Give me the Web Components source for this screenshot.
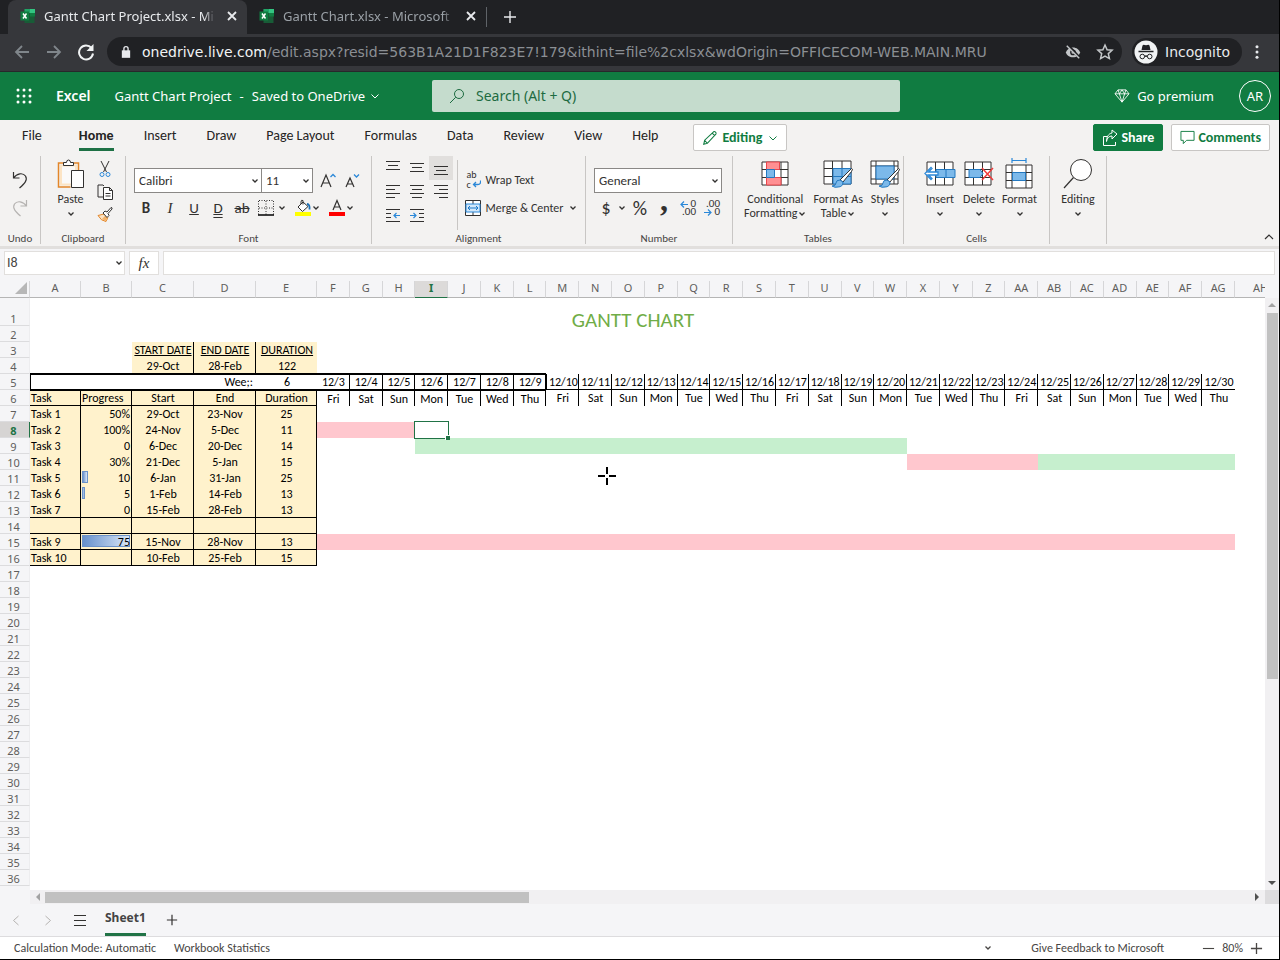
<!DOCTYPE html>
<html lang="en">
<head>
<meta charset="utf-8">
<meta name="viewport" content="width=device-width, initial-scale=1">
<title>Gantt Chart Project.xlsx</title>
<style>
    body {
        margin: 0;
        background: #f5f5f7;
        --ui: "Noto Sans", "Open Sans", sans-serif;
        --office: Carlito, Calibri, Lato, sans-serif;
        --green: #107c41;
        --line: #c8c6c4;
        font-family: var(--office);
        font-size: 12px;
        color: #323130;
    }
</style>
</head>
<body>
<excel-app></excel-app>

<script>
const ICONS = {
    excel: ['0 0 32 32', `<g stroke="none"><path fill="#185c37" d="M9 2h20v28H9z"/><path fill="#21a366" d="M9 2h11v8H9z"/><path fill="#33c481" d="M20 2h10v8H20z"/><path fill="#107c41" d="M20 10h10v7H20z"/><path fill="#107c41" d="M1 7h17v18H1z"/></g><path stroke="#fff" stroke-width="3" fill="none" d="M6 11l7 10M13 11l-7 10"/>`],
    close: ['0 0 12 12', `<path d="M2 2l8 8M10 2l-8 8" stroke-width="1.8"/>`],
    plus: ['0 0 14 14', `<path d="M7 1v12M1 7h12" stroke-width="1.4"/>`],
    minus: ['0 0 14 14', `<path d="M1 7h12" stroke-width="1.2"/>`],
    back: ['0 0 18 18', `<path d="M16 9H3M9 3L3 9l6 6" stroke-width="1.8"/>`],
    forward: ['0 0 18 18', `<path d="M2 9h13M9 3l6 6-6 6" stroke-width="1.8"/>`],
    reload: ['0 0 18 18', `<path d="M14.5 5A7 7 0 1 0 16 10.500" stroke-width="2"/><path fill="currentColor" stroke="none" d="M16.500 1v7h-7z"/>`],
    lock: ['0 0 12 16', `<path fill="currentColor" stroke="none" d="M1 6h10v9H1z"/><path d="M3.500 7V4a2.500 2.500 0 0 1 5 0v3" stroke-width="1.6"/>`],
    eyeoff: ['0 0 18 18', `<path fill="currentColor" stroke="none" d="M9 4C5 4 2 6.500 1 9.500 2 12.500 5 15 9 15s7-2.500 8-5.500C16 6.500 13 4 9 4z"/><circle cx="9" cy="9.500" r="3.200" fill="#202124" stroke="none"/><circle cx="9" cy="9.500" r="1.600" fill="currentColor" stroke="none"/><path d="M3 1l14 15" stroke="#202124" stroke-width="3"/><path d="M2 2l14 14" stroke-width="1.600"/>`],
    star: ['0 0 18 18', `<path d="M9 2l2.100 4.700 5 .5-3.800 3.400 1.100 5L9 13l-4.400 2.600 1.100-5L1.900 7.200l5-.5z" stroke-width="1.500"/>`],
    incognito: ['0 0 24 24', `<circle cx="12" cy="12" r="11.500" fill="#f1f3f4" stroke="none"/><path fill="#202124" stroke="none" d="M8.500 5.500l1-.8 2.500.6 2.500-.6 1 .8 1 4.500h-9z"/><path stroke="#202124" stroke-width="1.300" d="M4.500 11.500h15M10.500 16.500q1.500-1 3 0"/><circle cx="8.300" cy="16.500" r="2.300" stroke="#202124"/><circle cx="15.700" cy="16.500" r="2.300" stroke="#202124"/>`],
    dots: ['0 0 6 18', `<g fill="currentColor" stroke="none"><circle cx="3" cy="3" r="1.700"/><circle cx="3" cy="9" r="1.700"/><circle cx="3" cy="15" r="1.700"/></g>`],
    waffle: ['0 0 18 18', `<g fill="currentColor" stroke="none"><circle cx="3" cy="3" r="1.500"/><circle cx="9" cy="3" r="1.500"/><circle cx="15" cy="3" r="1.500"/><circle cx="3" cy="9" r="1.500"/><circle cx="9" cy="9" r="1.500"/><circle cx="15" cy="9" r="1.500"/><circle cx="3" cy="15" r="1.500"/><circle cx="9" cy="15" r="1.500"/><circle cx="15" cy="15" r="1.500"/></g>`],
    chevron: ['0 0 10 10', `<path d="M1.500 3.500L5 7l3.500-3.500"/>`],
    smallchevron: ['0 0 8 8', `<path d="M1.500 2.500L4 5l2.500-2.500" stroke-width="1.300"/>`],
    chevronup: ['0 0 10 10', `<path d="M1 7l4-4 4 4" stroke-width="1.200"/>`],
    left: ['0 0 12 12', `<path d="M8.500 2l-5 4.500 5 4.500"/>`],
    right: ['0 0 12 12', `<path d="M3.500 2l5 4.500-5 4.500"/>`],
    menu: ['0 0 14 14', `<path d="M1 2.500h12M1 7.500h12M1 12.500h12" stroke-width="1.200"/>`],
    search: ['0 0 16 16', `<circle cx="10" cy="6" r="4.500"/><path d="M6.800 9.200L1 15"/>`],
    diamond: ['0 0 18 16', `<path d="M4.500 1h9L17 5.500 9 15 1 5.500zM1 5.500h16M4.500 1L6 5.500 9 15l3-9.500L13.500 1M6 5.500L9 1l3 4.500"/>`],
    pencil: ['0 0 18 18', `<path d="M2 16l1-4.500L13 2q1-.8 2.200.4t.4 2.200L6 15zM3 11.500L6 15M11.500 3.500l3 3" stroke-width="1.200"/>`],
    share: ['0 0 16 18', `<path d="M5 7.500H1.500v9h12V13" /><path d="M4.500 12.500C5 9 7 7 10 7V10l5-5-5-4v3C6.500 4.500 4.500 8 4.500 12.500z"/>`],
    comment: ['0 0 16 16', `<path d="M1 1.500h14v9.500H7L3.500 14.500V11H1z"/>`],
    undo: ['0 0 18 20', `<path d="M2.500 2v6h6M2.500 8C6 3 12 2.500 14.500 6c2.500 4-1 7.500-6 12" stroke-width="1.200"/>`],
    redo: ['0 0 18 20', `<path d="M15.500 2v6h-6M15.500 8C12 3 6 2.500 3.500 6c-2.500 4 1 7.500 6 12" stroke-width="1.200"/>`],
    paste: ['0 0 28 30', `<path d="M7.500 4H1.500v24h12M17 4h4.500v7" stroke="#e3862a" stroke-width="1.500"/><path fill="#fce4c4" stroke="none" d="M3 5.500h17v6h-6v15H3z"/><path fill="#faf9f8" stroke="none" d="M5 7.500h13v5h-4v12H5z"/><path fill="#fff" d="M6.500 6.500v-3h3q0-2.500 2-2.500t2 2.500h3v3z"/><path fill="#fff" d="M14.500 11.500h12v17h-12z"/>`],
    cut: ['0 0 12 18', `<path d="M2 1l5.500 11M10 1L4.500 12"/><circle cx="3" cy="14.500" r="2" stroke="#2b88d8"/><circle cx="9" cy="14.500" r="2" stroke="#2b88d8"/>`],
    copy: ['0 0 16 16', `<path d="M6 13H1V1h5l1 1"/><path fill="#fff" d="M6.500 3.500h6l3 3v9h-9zM12.500 3.500v3h3M8.500 9.500h5M8.500 12h5"/>`],
    brush: ['0 0 16 16', `<path d="M1 9.500l6-1.500 4 3.500-2 4q-5-.5-8-6z" fill="#fce4c4" stroke="#e3862a"/><path fill="#f4b36b" stroke="none" d="M5 13l4-4 2 2.500-2 3.500z"/><path fill="#fff" d="M6 7l2-2 2 1 4-4.500q1.500 0 1 1.500l-4 4.500 1 2-2 2z"/>`],
    growfont: ['0 0 18 18', `<path d="M2 15L7 3l5 12M4 11h6" stroke-width="1.200"/><path stroke="#2b88d8" stroke-width="1.300" d="M11.500 5l2.500-2.500L16.500 5"/>`],
    shrinkfont: ['0 0 18 18', `<path d="M3 15L7 6l4 9M4.500 12h5" stroke-width="1.200"/><path stroke="#2b88d8" stroke-width="1.300" d="M11 2.500L13.500 5 16 2.500"/>`],
    borders: ['0 0 16 16', `<path stroke-dasharray="1 1.500" d="M1 .5h15M.5 1v14M15.500 1v14M8 1v14M1 8h15"/><path d="M0 15h16" stroke="#000" stroke-width="1.500"/>`],
    fill: ['0 0 18 18', `<path fill="#ffff00" stroke="none" d="M1 13h16v4H1z"/><path fill="#fff" d="M4 8l5-5 5 4.500-5.500 5zM9 5.500V1.500q-2-1-2 1.500v2"/><path d="M13 5q3 0 2.500 5.500" stroke="#1a6fb5" stroke-width="1.800"/>`],
    fontcolor: ['0 0 18 18', `<path fill="#ff0000" stroke="none" d="M1 13h16v4H1z"/><path d="M5 11l4-9.500L13 11M6.500 8h5" stroke-width="1.200"/>`],
    top: ['0 0 16 16', `<path d="M1 1.500h14M3 5.500h10M1 9.500h14"/>`],
    middle: ['0 0 16 16', `<path d="M1 3.500h14M3 7.500h10M1 11.500h14"/>`],
    bottom: ['0 0 16 16', `<path d="M1 6.500h14M3 10.500h10M1 14.500h14"/>`],
    alignleft: ['0 0 16 16', `<path d="M1 1.500h14M1 5.500h9M1 9.500h14M1 13.500h9"/>`],
    aligncenter: ['0 0 16 16', `<path d="M1 1.500h14M3 5.500h10M1 9.500h14M3 13.500h10"/>`],
    alignright: ['0 0 16 16', `<path d="M1 1.500h14M6 5.500h9M1 9.500h14M6 13.500h9"/>`],
    outdent: ['0 0 16 16', `<path d="M1 1.500h14M1 5.500h5M1 9.500h5M1 13.500h14"/><path stroke="#2b88d8" stroke-width="1.200" d="M15 7.500H9M11.500 5L9 7.500l2.500 2.500"/>`],
    indent: ['0 0 16 16', `<path d="M1 1.500h14M10 5.500h5M10 9.500h5M1 13.500h14"/><path stroke="#2b88d8" stroke-width="1.200" d="M1 7.500h6M4.500 5L7 7.500 4.500 10"/>`],
    merge: ['0 0 16 16', `<path fill="#fff" d="M.5.500h15v15H.5zM8 .5v15"/><path fill="#d3e8fa" stroke="#2b88d8" d="M1 4h14v8H1z"/><path stroke="#1a78c8" d="M3 8h10M5 6L3 8l2 2M11 6l2 2-2 2"/>`],
    cond: ['0 0 28 26', `<path fill="#fff" d="M1 1h26v23H1zM20 1v23M1 8.500h26M1 16.500h26"/><path fill="#ff8f92" stroke="#e8474c" d="M5.500 1h13v7.500h-13zM5.500 16.500h14.500V24H5.500z"/><path fill="#7cb9ea" stroke="#2479c0" d="M5.500 8.500h8v8h-8z"/>`],
    fmttable: ['0 0 30 28', `<path fill="#fff" d="M1 1h27v23H1zM9.500 1v23M19 1v23M1 8.500h27M1 16.500h27"/><path fill="#7cb9ea" stroke="#2479c0" d="M10 8.500h18V24H10zM19 8.500V24M10 16.500h18"/><path d="M28.500 8.500q2 0 0 3L20 22l-3-2z" fill="#fff"/><path fill="#7cb9ea" stroke="#2479c0" d="M17 20l3 2q0 5-5 5-3 1-6-1 4 0 4-3t4-3z"/>`],
    styles: ['0 0 30 28', `<path fill="#fff" d="M1 1h27v23H1zM6 1v23M1 6h27M1 19h27M24 1v23"/><path fill="#7cb9ea" stroke="#2479c0" d="M6 6h18v13H6z"/><path d="M28.500 8.500q2 0 0 3L20 22l-3-2z" fill="#fff"/><path fill="#7cb9ea" stroke="#2479c0" d="M17 20l3 2q0 5-5 5-3 1-6-1 4 0 4-3t4-3z"/>`],
    insert: ['0 0 32 26', `<path fill="#fff" d="M3 1h26v23H3zM11.500 1v23M20.500 1v23"/><path fill="#7cb9ea" stroke="#2479c0" d="M12 8.500h19v8H12zM22 8.500v8"/><path fill="#fff" stroke="#2b88d8" stroke-width="1.300" d="M14 11H4.500L8 7.500 7 6.500 1 12.500l6 6 1-1L4.500 14H14z"/>`],
    delete: ['0 0 30 26', `<path fill="#fff" d="M1 1h26v23H1zM9.500 1v23M18.500 1v23M1 8.500h26M1 16.500h26"/><path fill="#7cb9ea" stroke="#2479c0" d="M5 8.500h11l3 4-3 4H5z"/><path stroke="#f03a3a" stroke-width="1.500" d="M18 7l11 12M29 7L18 19"/>`],
    format: ['0 0 28 32', `<path stroke="#2b88d8" stroke-width="1.200" d="M7 2.500h14M7 0v5M21 0v5"/><path fill="#fff" d="M1 7h26v23H1zM7 7v23M21 7v23M1 14.500h26M1 22.500h26"/><path fill="#7cb9ea" stroke="#2479c0" d="M7.500 14.500h13v8h-13z"/>`],
    find: ['0 0 30 32', `<circle cx="18" cy="12" r="10.500" fill="#fff"/><path d="M10.500 19.500L1 30" stroke-width="1.200"/>`],
    wrap: ['0 0 14 16', `<path stroke="#2b88d8" stroke-width="1.300" d="M13.500 8.500q.5 4-2.500 4H6.500M9 10l-2.500 2.500L9 15"/>`],
    decup: ['0 0 16 16', `<path stroke="#2b88d8" stroke-width="1.200" d="M8 4.500H1M4 1.500l-3 3 3 3"/>`],
    decdown: ['0 0 16 16', `<path stroke="#2b88d8" stroke-width="1.200" d="M0 12.500h7M4 9.500l3 3-3 3"/>`],
    cursor: ['0 0 20 20', `<path stroke="#fff" stroke-width="4" d="M10 0v20M0 10h20"/><path stroke="#000" stroke-width="2" d="M10 1v7M10 12v7M1 10h7M12 10h7"/>`],
};

function define(name, html, setup) {
    const template = document.createElement('template');
    template.innerHTML = html;
    customElements.define(name, class extends HTMLElement {
        constructor() {
            super();
            this.attachShadow({ mode: 'open' });
        }
        connectedCallback() {
            if (this.shadowRoot.firstChild) return;
            this.shadowRoot.appendChild(template.content.cloneNode(true));
            if (setup) setup.call(this, this.shadowRoot);
        }
    });
}

const BUTTON = `button { font: inherit; color: inherit; background: none; border: 0; padding: 0; margin: 0; display: flex; align-items: center; justify-content: center; }`;

// <xl-icon name="..." w="16" h="16">
define('xl-icon', `<style>
    :host { display: inline-flex; flex: none; }
    svg { display: block; fill: none; stroke: currentColor; stroke-width: 1; }
</style>`, function (root) {
    const [box, body] = ICONS[this.getAttribute('name')];
    const [, , w, h] = box.split(' ');
    root.innerHTML += `<svg aria-hidden="true" viewBox="${box}" width="${this.getAttribute('w') || w}" height="${this.getAttribute('h') || h}">${body}</svg>`;
});

define('browser-tab', `<style>
    :host { display: flex; align-items: center; gap: 8px; width: 218px; height: 32px; padding: 0 9px 2px 12px; box-sizing: content-box; color: #9aa0a6; font: 13px/18px var(--ui); }
    :host([active]) { background: #36373b; color: #e8eaed; border-radius: 8px 8px 0 0; }
    ${BUTTON}
    span { flex: 1; overflow: hidden; white-space: nowrap; mask-image: linear-gradient(to right, #000 92%, transparent 98%); }
    button { color: #e8eaed; }
</style>
<xl-icon name="excel" w="16" h="16"></xl-icon><span><slot></slot></span>
<button aria-label="Close tab"><xl-icon name="close"></xl-icon></button>`);

define('browser-bar', `<style>
    :host { display: block; background: #202124; color: #e8eaed; font: 14px/20px var(--ui); }
    ${BUTTON}
    .tabs { display: flex; align-items: center; padding-left: 8px; height: 34px; }
    .tabs > button { padding-left: 16px; }
    hr { border: 0; width: 1px; height: 20px; margin: 0; background: #5f6368; }
    .bar { display: flex; align-items: center; gap: 12px; background: #36373b; height: 35px; padding: 0 19px 2px 13px; border-bottom: 1px solid #27282b; }
    .nav { display: flex; gap: 14px; color: #80868b; }
    .address { flex: 1; display: flex; align-items: center; gap: 11px; height: 29px; padding: 0 8px 0 14px; border-radius: 15px; background: #202124; min-width: 0; }
    .address a { flex: 1; color: #8b8f94; text-decoration: none; font: 14px/20px "DejaVu Sans", var(--ui); white-space: nowrap; overflow: hidden; }
    .address b { color: #f1f3f4; font-weight: 400; }
    .address button { color: #c4c7c9; margin-left: 4px; }
    .who { display: flex; align-items: center; gap: 7px; height: 28px; margin-left: -2px; padding: 0 12px 0 2px; border-radius: 14px; background: #202124; font: 14px/20px "DejaVu Sans", var(--ui); }
</style>
<div class="tabs">
    <browser-tab active>Gantt Chart Project.xlsx - Microsoft Excel</browser-tab>
    <browser-tab>Gantt Chart.xlsx - Microsoft Excel Online</browser-tab>
    <hr><button aria-label="New tab"><xl-icon name="plus"></xl-icon></button>
</div>
<div class="bar">
    <div class="nav">
        <button aria-label="Back"><xl-icon name="back"></xl-icon></button>
        <button aria-label="Forward"><xl-icon name="forward"></xl-icon></button>
        <button aria-label="Reload" style="color:#f1f3f4"><xl-icon name="reload"></xl-icon></button>
    </div>
    <div class="address">
        <xl-icon name="lock" w="10" h="14"></xl-icon>
        <a href="#"><b>onedrive.live.com</b>/edit.aspx?resid=563B1A21D1F823E7!179&amp;ithint=file%2cxlsx&amp;wdOrigin=OFFICECOM-WEB.MAIN.MRU</a>
        <button aria-label="Tracking blocked"><xl-icon name="eyeoff" w="16" h="16"></xl-icon></button>
        <button aria-label="Bookmark"><xl-icon name="star" w="18" h="18"></xl-icon></button>
    </div>
    <div class="who"><xl-icon name="incognito"></xl-icon>Incognito</div>
    <button aria-label="Menu"><xl-icon name="dots" w="6" h="16"></xl-icon></button>
</div>`);

define('excel-header', `<style>
    :host { display: grid; grid-template-columns: 432px minmax(0, 468px) 1fr; align-items: center; height: 48px; background: var(--green); color: #fff; font: 13px/18px var(--ui); }
    ${BUTTON}
    .left { display: flex; align-items: center; padding-left: 15px; }
    .left b { font-size: 14px; font-weight: 600; margin: 0 24px 0 23px; }
    .left xl-icon[name=chevron] { margin-left: 5px; }
    .left button { white-space: pre; }
    .dash { margin: 0 8px; }
    .right { display: flex; align-items: center; justify-content: flex-end; gap: 25px; padding-right: 8px; }
    .go { gap: 7px; }
    .me { width: 32px; height: 32px; box-sizing: border-box; border: 1px solid #fff; border-radius: 50%; }
    label { display: flex; align-items: center; gap: 11px; height: 32px; padding-left: 17px; border-radius: 2px; background: #c5dccd; color: #1d6b41; }
    input { flex: 1; border: 0; background: none; font: 14px/18px var(--ui); padding: 0; color: inherit; outline: 0; }
    input::placeholder { color: #1d6b41; opacity: 1; }
</style>
<div class="left">
    <button aria-label="Apps"><xl-icon name="waffle"></xl-icon></button><b>Excel</b>
    <button>Gantt Chart Project<span class="dash">-</span>Saved to OneDrive<xl-icon name="chevron"></xl-icon></button>
</div>
<label><xl-icon name="search"></xl-icon><input type="search" placeholder="Search (Alt + Q)" aria-label="Search"></label>
<div class="right">
    <button class="go"><xl-icon name="diamond" w="16" h="14"></xl-icon>Go premium</button>
    <button class="me">AR</button>
</div>`);

define('ribbon-tabs', `<style>
    :host { display: flex; align-items: flex-start; height: 35px; padding: 0 9px 0 22px; font-size: 14px; line-height: 18px; color: #252423; }
    ${BUTTON}
    nav { display: flex; gap: 30px; }
    a { color: inherit; text-decoration: none; padding: 7px 0 3px; border-bottom: 3px solid transparent; white-space: nowrap; }
    a:first-child { margin-right: 7px; }
    a.on { font-weight: 700; border-color: #1e7145; }
    .b { height: 27px; box-sizing: border-box; margin-top: 4px; padding: 0 8px; gap: 3px; background: #fff; border: 1px solid var(--line); border-radius: 2px; color: var(--green); font-weight: 700; }
    .mode { margin-left: 35px; gap: 4px; }
    .share { margin-left: auto; margin-right: 8px; background: var(--green); border-color: var(--green); color: #fff; }
    .mode xl-icon:last-child { margin-left: 2px; }
</style>
<nav>
    <a href="#">File</a><a href="#" class="on">Home</a><a href="#">Insert</a><a href="#">Draw</a><a href="#">Page Layout</a><a href="#">Formulas</a><a href="#">Data</a><a href="#">Review</a><a href="#">View</a><a href="#">Help</a>
</nav>
<button class="b mode"><xl-icon name="pencil" w="16" h="16"></xl-icon>Editing<xl-icon name="chevron"></xl-icon></button>
<button class="b share"><xl-icon name="share" w="16" h="18"></xl-icon>Share</button>
<button class="b"><xl-icon name="comment" w="15" h="15"></xl-icon>Comments</button>`);

// a drop-down drawn as a thin box with its own chevron
define('xl-select', `<style>
    :host { display: grid; align-items: center; height: 25px; box-sizing: border-box; border: 1px solid #8a8886; background: #fff; }
    select, xl-icon { grid-area: 1 / 1; }
    select { appearance: none; border: 0; background: none; font: 13px/18px var(--office); color: #323130; padding: 0 4px; width: 100%; height: 100%; }
    xl-icon { justify-self: end; margin-right: 2px; pointer-events: none; }
</style>
<select></select><xl-icon name="smallchevron"></xl-icon>`, function (root) {
    const select = root.querySelector('select');
    select.setAttribute('aria-label', this.getAttribute('label'));
    select.add(new Option(this.getAttribute('value')));
});

define('ribbon-group', `<style>
    :host { display: flex; flex-direction: column; border-right: 1px solid var(--line); height: 88px; box-sizing: border-box; margin-top: 1px; min-width: 0; }
    div { flex: 1; display: flex; justify-content: center; min-width: 0; }
    footer { text-align: center; font-size: 11px; line-height: 10px; color: #484644; min-height: 10px; }
</style>
<div><slot></slot></div><footer></footer>`, function (root) {
    root.querySelector('footer').textContent = this.getAttribute('label') || '';
});

// large command: icon above one or two lines of text
define('big-button', `<style>
    :host { display: block; }
    ${BUTTON}
    button { flex-direction: column; justify-content: flex-start; line-height: 14px; white-space: pre; text-align: center; }
    .pic { height: 36px; display: flex; align-items: center; }
    xl-icon[name=smallchevron] { vertical-align: middle; margin-left: 1px; }
</style>
<button><span class="pic"></span><span class="text"></span></button>`, function (root) {
    root.querySelector('.pic').innerHTML = `<xl-icon name="${this.getAttribute('icon')}"></xl-icon>`;
    root.querySelector('.text').innerHTML = this.getAttribute('text').replace('|', '\n') + '<xl-icon name="smallchevron"></xl-icon>';
});

define('excel-ribbon', `<style>
    :host { display: grid; grid-template-columns: 41px 85px 246px 214px 147px 171px 146px 57px 1fr; height: 91px; border-bottom: 3px solid #e1dfdd; }
    ${BUTTON}
    .col { display: flex; flex-direction: column; align-items: center; }
    .row { display: flex; align-items: center; }
    .font { flex: 1; min-width: 0; padding: 12px 0 0 8px; }
    .font .row, .num .row { height: 25px; }
    .font .row + .row, .num .row + .row { margin-top: 3px; height: 24px; }
    .tools button { width: 24px; height: 24px; font-size: 15px; flex: none; }
    .tools button.v { width: 8px; margin-right: 8px; }
    .align { display: grid; grid-template-columns: 24px 24px 24px; grid-auto-rows: 24px; }
    .align button.on { background: #e1dfdd; }
    .text { border-left: 1px solid var(--line); margin: 4px 0 0 4px; padding: 8px 0 0 7px; height: 62px; }
    .text button { gap: 5px; height: 24px; margin-bottom: 4px; white-space: nowrap; font-size: 12px; }
    .wrap, .dec { display: grid; line-height: 8px; font-size: 11px; }
    .wrap { width: 14px; height: 20px; text-align: left; font-size: 10px; line-height: 10px; align-items: center; margin-left: 2px; }
    .wrap span { display: grid; }
    .wrap > *, .dec > * { grid-area: 1 / 1; }
    .dec { width: 16px; height: 16px; text-align: right; white-space: pre; }
    .shift { margin-left: 8px; }
    .end { align-self: end; justify-self: end; padding: 0 5px 4px 0; }
</style>
<ribbon-group label="Undo">
    <div class="col" style="gap:8px;padding-top:14px"><button aria-label="Undo"><xl-icon name="undo"></xl-icon></button><button aria-label="Redo" style="color:#b5b3b1"><xl-icon name="redo"></xl-icon></button></div>
</ribbon-group>
<ribbon-group label="Clipboard">
    <div class="row" style="align-items:flex-start;gap:12px;margin-left:3px">
        <big-button icon="paste" text="Paste|"></big-button>
        <div class="col" style="gap:6px;padding-top:4px"><button aria-label="Cut"><xl-icon name="cut"></xl-icon></button><button aria-label="Copy"><xl-icon name="copy"></xl-icon></button><button aria-label="Format painter"><xl-icon name="brush"></xl-icon></button></div>
    </div>
</ribbon-group>
<ribbon-group label="Font">
    <div class="font">
        <div class="row"><xl-select label="Font" value="Calibri" style="width:128px"></xl-select><xl-select label="Font size" value="11" style="width:52px;margin-left:-1px"></xl-select>
            <div class="row tools" style="margin-left:3px"><button aria-label="Increase font size"><xl-icon name="growfont"></xl-icon></button><button aria-label="Decrease font size"><xl-icon name="shrinkfont"></xl-icon></button></div></div>
        <div class="row tools">
            <button><b>B</b></button><button><i style="font-family:'Liberation Serif',serif">I</i></button><button><u>U</u></button><button><u style="text-decoration-style:double">D</u></button><button><s>ab</s></button>
            <button aria-label="Borders"><xl-icon name="borders"></xl-icon></button><button class="v" aria-label="Border options"><xl-icon name="smallchevron"></xl-icon></button>
            <button aria-label="Fill colour" style="width:18px"><xl-icon name="fill" w="18" h="18"></xl-icon></button><button class="v" aria-label="Fill options"><xl-icon name="smallchevron"></xl-icon></button>
            <button aria-label="Font colour" style="width:18px"><xl-icon name="fontcolor"></xl-icon></button><button class="v" aria-label="Font colour options"><xl-icon name="smallchevron"></xl-icon></button>
        </div>
    </div>
</ribbon-group>
<ribbon-group label="Alignment">
    <div class="row" style="align-items:flex-start">
        <div class="align">
            <button aria-label="Top align"><xl-icon name="top"></xl-icon></button><button aria-label="Middle align"><xl-icon name="middle"></xl-icon></button><button class="on" aria-label="Bottom align"><xl-icon name="bottom"></xl-icon></button>
            <button aria-label="Align left"><xl-icon name="alignleft"></xl-icon></button><button aria-label="Center"><xl-icon name="aligncenter"></xl-icon></button><button aria-label="Align right"><xl-icon name="alignright"></xl-icon></button>
            <button aria-label="Decrease indent"><xl-icon name="outdent"></xl-icon></button><button aria-label="Increase indent"><xl-icon name="indent"></xl-icon></button>
        </div>
        <div class="text">
            <button><span class="wrap"><span><span>ab</span><span>c</span></span><xl-icon name="wrap"></xl-icon></span>Wrap Text</button>
            <button><xl-icon name="merge"></xl-icon>Merge &amp; Center<xl-icon name="smallchevron"></xl-icon></button>
        </div>
    </div>
</ribbon-group>
<ribbon-group label="Number">
    <div class="font num">
        <div class="row"><xl-select label="Number format" value="General" style="width:128px"></xl-select></div>
        <div class="row tools"><button style="font-size:18px">$</button><button class="v" style="margin-right:2px" aria-label="Currency options"><xl-icon name="smallchevron"></xl-icon></button><button style="font-size:20px">%</button><button style="font:700 32px/10px 'Liberation Serif',serif;padding-bottom:16px">,</button>
            <button><span class="dec"><span> 0
.00</span><xl-icon name="decup"></xl-icon></span></button>
            <button><span class="dec"><span>.00
 0</span><xl-icon name="decdown"></xl-icon></span></button></div>
    </div>
</ribbon-group>
<ribbon-group label="Tables">
    <big-button class="shift" icon="cond" text="Conditional|Formatting"></big-button><big-button icon="fmttable" text="Format As|Table" style="margin:0 7px"></big-button><big-button icon="styles" text="Styles|"></big-button>
</ribbon-group>
<ribbon-group label="Cells">
    <big-button class="shift" icon="insert" text="Insert|"></big-button><big-button icon="delete" text="Delete|" style="margin:0 7px"></big-button><big-button icon="format" text="Format|"></big-button>
</ribbon-group>
<ribbon-group><big-button icon="find" text="Editing|"></big-button></ribbon-group>
<button class="end" aria-label="Collapse ribbon"><xl-icon name="chevronup"></xl-icon></button>`);

define('formula-bar', `<style>
    :host { display: flex; gap: 4px; padding: 2px 4px 6px; }
    label, button { height: 24px; box-sizing: border-box; border: 1px solid #e1dfdd; background: #fff; display: flex; align-items: center; }
    .name { width: 121px; padding: 0 1px 0 2px; }
    .fx { flex: 1; }
    button { width: 30px; justify-content: center; font: italic 15px/16px "Liberation Serif", serif; color: #323130; padding: 0; }
    input { flex: 1; min-width: 0; border: 0; padding: 0; font: 14px/18px var(--office); color: #484644; outline: 0; background: none; }
</style>
<label class="name"><input aria-label="Name box" value="I8"><xl-icon name="smallchevron"></xl-icon></label>
<button aria-label="Insert function">fx</button>
<label class="fx"><input aria-label="Formula"></label>`);

const DAYS = ['Fri', 'Sat', 'Sun', 'Mon', 'Tue', 'Wed', 'Thu'];
const TASKS = {
    6: ['Task', 'Progress', 'Start', 'End', 'Duration'],
    7: ['Task 1', '50%', '29-Oct', '23-Nov', '25'],
    8: ['Task 2', '100%', '24-Nov', '5-Dec', '11'],
    9: ['Task 3', '0', '6-Dec', '20-Dec', '14'],
    10: ['Task 4', '30%', '21-Dec', '5-Jan', '15'],
    11: ['Task 5', '10', '6-Jan', '31-Jan', '25'],
    12: ['Task 6', '5', '1-Feb', '14-Feb', '13'],
    13: ['Task 7', '0', '15-Feb', '28-Feb', '13'],
    14: ['', '', '', '', ''],
    15: ['Task 9', '75', '15-Nov', '28-Nov', '13'],
    16: ['Task 10', '', '10-Feb', '25-Feb', '15'],
};
// row: [first column, last column, class]
const SPANS = {
    8: [[5, 7, 'red']],
    9: [[8, 22, 'green']],
    10: [[23, 26, 'red'], [27, 32, 'green']],
    15: [[5, 32, 'red']],
};
const BARS = { 11: 6, 12: 3, 15: 48 };

define('sheet-grid', `<style>
    :host { display: block; overflow: hidden; background: #fff; color: #000; }
    table { table-layout: fixed; width: 100%; border-collapse: separate; border-spacing: 0; font-size: 12px; }
    th { font: 400 11px/14px var(--ui); color: #605e5c; background: #f5f5f7; padding: 0; box-sizing: border-box; }
    thead th { height: 17px; border-right: 1px solid #d6d6d8; border-bottom: 1px solid #b5b5b5; padding-bottom: 2px; overflow: hidden; white-space: nowrap; }
    thead th:last-child { border-right: 0; padding-left: 18px; }
    thead th.on { background: #dcdad9; color: #217346; font-weight: 700; border-bottom-color: #217346; }
    .corner { display: block; width: 12px; height: 12px; margin-left: 15px; background: #b7b7b7; clip-path: polygon(100% 0, 100% 100%, 0 100%); }
    tbody th { border-bottom: 1px solid #dcdcde; border-right: 1px solid #ededef; padding-right: 2px; line-height: 12px; vertical-align: bottom; }
    tbody th.on { background: #d6d4d3; color: #217346; font-weight: 700; border-right: 1px solid #217346; }
    td { height: 16px; box-sizing: border-box; padding: 0 0 0 1px; line-height: 14px; text-align: center; white-space: nowrap; }
    tr.first td { height: 28px; font-size: 21px; line-height: 12px; color: #70ad47; vertical-align: bottom; }
    td.y { background: #fff2cc; }
    td.l { text-align: left; }
    td.r { text-align: right; padding-right: 1px; }
    .bl { border-left: 1px solid #000; }
    .br { border-right: 1px solid #000; }
    .bt { border-top: 1px solid #000; }
    .bb { border-bottom: 1px solid #000; }
    .red { background: #ffc7ce; }
    .green { background: #c6efce; }
    td.bar { background: linear-gradient(to right, #6690cc, #d9e6f6) 2px 2px / calc(var(--bar) - 2px) 10px no-repeat, linear-gradient(#6b92c9, #6b92c9) 1px 1px / var(--bar) 12px no-repeat, #fff2cc; }
    .sel { position: relative; outline: 1px solid #217346; }
    .sel i { position: absolute; right: -2px; bottom: -2px; width: 4px; height: 4px; background: #217346; border: 1px solid #fff; border-width: 1px 0 0 1px; }
</style>
<table><colgroup></colgroup><thead></thead><tbody></tbody></table>`, function (root) {
    const letters = [];
    for (let i = 0; i < 34; i++) letters.push(i < 26 ? String.fromCharCode(65 + i) : 'A' + String.fromCharCode(39 + i));

    root.querySelector('colgroup').innerHTML = [30, 51, 51, 62, 62, 61].map(w => `<col style="width:${w}px">`).join('')
        + '<col>'.repeat(28) + '<col style="width:30px">';
    root.querySelector('thead').innerHTML = '<tr><th><span class="corner"></span></th>'
        + letters.map(l => `<th class="${l === 'I' ? 'on' : ''}">${l}</th>`).join('') + '</tr>';

    let rows = '';
    for (let r = 1; r <= 36; r++) {
        rows += `<tr class="${r === 1 ? 'first' : ''}"><th class="${r === 8 ? 'on' : ''}">${r}</th>`;
        if (r === 1) rows += '<td colspan="33">GANTT CHART</td><td></td>';
        else if (r <= 16) for (let c = 0; c < 34; c++) rows += this.cell(r, c);
        else rows += '<td colspan="34"></td>';
        rows += '</tr>';
    }
    root.querySelector('tbody').innerHTML = rows;
});

customElements.get('sheet-grid').prototype.cell = function (r, c) {
    const cls = [];
    let text = '';
    let style = '';
    if ((r === 3 || r === 4) && c >= 2 && c <= 4) {
        text = r === 3 ? '<u>' + ['START DATE', 'END DATE', 'DURATION'][c - 2] + '</u>' : ['29-Oct', '28-Feb', '122'][c - 2];
        cls.push('y');
        if (c < 4) cls.push('br');
    }
    if (r === 4 && c <= 11) cls.push('bb');
    if (r === 5 && c <= 32) {
        cls.push('bb');
        if (c <= 11) cls.push('bt');
        if (c === 0 || c === 12) cls.push('bl');
        if (c >= 5 && c < 32) cls.push('br');
        if (c === 3) { text = 'Wee;:'; cls.push('r'); style = 'padding-right:3px'; }
        if (c === 4) text = '6';
        if (c >= 5) text = '12/' + (c - 2);
    }
    if (r === 6 && c <= 11) cls.push('bt');
    if (r === 6 && c >= 5 && c <= 32) {
        text = DAYS[(c - 5) % 7];
        if (c < 32) cls.push('br');
    }
    if (r >= 6 && c < 5) {
        text = TASKS[r][c];
        cls.push('y', 'br');
        if (c === 0 || (c === 1 && r === 6)) cls.push('l');
        else if (c === 1) cls.push('r');
        if (r === 6 || r >= 13) cls.push('bb');
        if (c === 1 && BARS[r]) { cls.push('bar'); style = `--bar:${BARS[r]}px`; }
    }
    for (const [from, to, name] of SPANS[r] || []) if (c >= from && c <= to) cls.push(name);
    if (r === 8 && c === 8) { cls.push('sel'); text = '<i></i>'; }
    return `<td class="${cls.join(' ')}" style="${style}">${text}</td>`;
};

define('scroll-bar', `<style>
    :host { display: flex; align-items: center; background: #f1f0f2; }
    :host([vertical]) { flex-direction: column; width: 14px; }
    i { flex: none; width: 0; height: 0; border: 4px solid transparent; margin: 0 5px; }
    .a { border-right-color: #a3a3a3; margin-left: 2px; }
    .b { border-left-color: #505050; margin: 0 2px 0 auto; }
    :host([vertical]) .a { border-right-color: transparent; border-bottom-color: #a3a3a3; margin: 1px 0 6px; }
    :host([vertical]) .b { border-left-color: transparent; border-top-color: #505050; margin: auto 0 1px; }
    div { background: #c1c1c1; width: var(--size); height: 11px; }
    :host([vertical]) div { height: var(--size); width: 11px; }
</style>
<i class="a"></i><div></div><i class="b"></i>`);

define('sheet-tabs', `<style>
    :host { display: flex; align-items: center; height: 32px; padding-left: 10px; border-bottom: 1px solid #dddcde; }
    ${BUTTON}
    .tab { align-self: stretch; font: 700 12px/16px var(--ui); color: #444; border-bottom: 3px solid #217346; padding-bottom: 1px; margin: 0 20px 0 18px; }
    .dim { color: #b5b3b1; margin-right: 20px; }
    .dim + .dim { margin-right: 19px; }
</style>
<button class="dim" aria-label="Previous sheet"><xl-icon name="left"></xl-icon></button>
<button class="dim" aria-label="Next sheet"><xl-icon name="right"></xl-icon></button>
<button aria-label="All sheets"><xl-icon name="menu"></xl-icon></button>
<button class="tab">Sheet1</button>
<button aria-label="Add sheet"><xl-icon name="plus" w="12" h="12"></xl-icon></button>`);

define('status-bar', `<style>
    :host { display: flex; align-items: center; gap: 18px; flex: 1; min-height: 22px; padding: 0 16px 0 14px; background: #fff; color: #484644; line-height: 16px; }
    ${BUTTON}
    .push { margin-left: auto; margin-right: 21px; }
    .zoom { display: flex; align-items: center; gap: 7px; margin-left: 20px; }
</style>
<button>Calculation Mode: Automatic</button><button>Workbook Statistics</button>
<button class="push" aria-label="Status options"><xl-icon name="smallchevron"></xl-icon></button>
<button>Give Feedback to Microsoft</button>
<div class="zoom"><button aria-label="Zoom out"><xl-icon name="minus" w="13" h="13"></xl-icon></button>80%<button aria-label="Zoom in"><xl-icon name="plus" w="13" h="13"></xl-icon></button></div>`);

define('excel-app', `<style>
    :host { display: flex; flex-direction: column; min-height: 100vh; box-sizing: border-box; border-right: 1px solid #000; border-bottom: 1px solid #000; position: relative; }
    .top { background: #f3f2f1; }
    .sheet { display: grid; grid-template-columns: minmax(0, 1fr) 14px; }
    .sheet scroll-bar[vertical] { margin-top: 17px; }
    sheet-grid { padding-bottom: 4px; background: linear-gradient(to right, #f5f5f7 30px, #fff 30px); }
    .h { margin-left: 30px; height: 14px; }
    .knob { background: #dddcde; }
    .cursor { position: absolute; left: 597px; top: 466px; }
</style>
<browser-bar></browser-bar>
<excel-header></excel-header>
<div class="top"><ribbon-tabs></ribbon-tabs><excel-ribbon></excel-ribbon></div>
<formula-bar></formula-bar>
<div class="sheet">
    <sheet-grid></sheet-grid><scroll-bar vertical style="--size:366px"></scroll-bar>
    <scroll-bar class="h" style="--size:484px"></scroll-bar><span class="knob"></span>
</div>
<sheet-tabs></sheet-tabs>
<status-bar></status-bar>
<xl-icon class="cursor" name="cursor"></xl-icon>`);
</script>
</body>
</html>
